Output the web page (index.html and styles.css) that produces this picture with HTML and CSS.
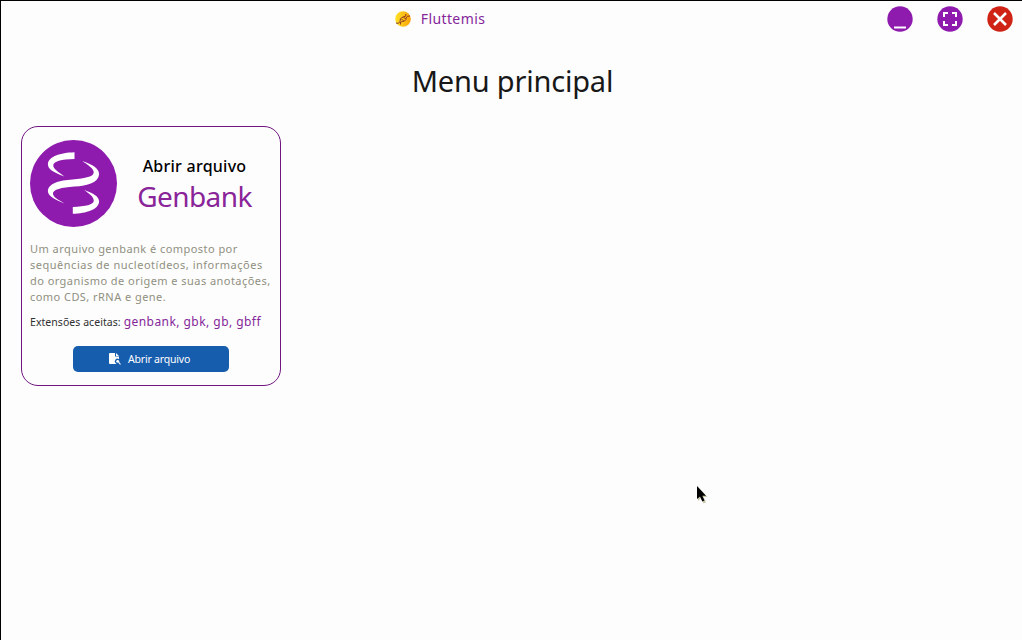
FILE: index.html
```html
<!DOCTYPE html>
<html lang="pt-BR">
<head>
<meta charset="utf-8">
<title>Fluttemis</title>
<link rel="stylesheet" href="styles.css">
</head>
<body>
<div class="window">
  <header class="titlebar">
    <div class="brand">
      <svg class="brand-logo" viewBox="0 0 16 16"><defs><linearGradient id="sun"><stop offset="0" stop-color="#ffe329"/><stop offset="1" stop-color="#f7a007"/></linearGradient></defs><circle cx="8" cy="8" r="7.8" fill="url(#sun)"/><path d="M1 12Q4 13.500 5 10.500Q4.500 7 8 6Q11.500 6 11 3M5.500 13.500Q4.500 10.500 7.500 10.500Q11.500 10 11 7Q12 4.500 15 5M6.500 8L8.500 10M8.500 6L10.500 8" fill="none" stroke="#8d3a25" stroke-width="1"/></svg>
      <span class="brand-name">Fluttemis</span>
    </div>
    <nav class="controls">
      <svg class="control" viewBox="0 0 26 26"><circle class="violet" cx="13" cy="13" r="12.700"/><path class="line" d="M7 21.500H19"/></svg>
      <svg class="control" viewBox="0 0 26 26"><circle class="violet" cx="13" cy="13" r="12.700"/><path class="line" d="M7 11V7H11M15 7H19V11M19 15V19H15M11 19H7V15"/></svg>
      <svg class="control" viewBox="0 0 26 26"><circle class="red" cx="13" cy="13" r="12.700"/><path class="line cross" d="M7 7L19 19M19 7L7 19"/></svg>
    </nav>
  </header>
  <main>
    <h1 class="title">Menu principal</h1>
    <section class="card">
      <div class="card-head">
        <svg class="helix" viewBox="0 0 86 86"><circle class="violet" cx="43" cy="43" r="43"/>
          <g fill="#fff"><path d="M44 12V18.700C31 19 23 21 23 25C23 29 28 31.500 34 36C23 32 17.700 29 17.700 24C18 16 30 12.500 44 12Z"/><path d="M51.700 20.700C63 25 68.300 28 68.300 34C67.500 42 57 45 44 46C31 47 22.500 49 22.700 53C23 57 28 59 34 62.700C23 58.500 17.700 55 17.700 50.500C18 43 29 39.800 42 39C55 38 63 36.500 63 32C63 28 57 24.500 51.700 20.700Z"/><path d="M53.300 49.300C63 53 68.300 56 68.300 61C67.500 69 56 72.300 42.300 73V66.200C55 65.500 63 64 63 60C63 56 58 53 53.300 49.300Z"/></g>
        </svg>
        <div class="card-title"><span class="action">Abrir arquivo</span><span class="format">Genbank</span></div>
      </div>
      <p class="description">Um arquivo genbank é composto por<br><span class="wide">sequências de nucleotídeos, informações</span><br>do organismo de origem e suas anotações,<br>como CDS, rRNA e gene.</p>
      <p class="extensions"><span class="label">Extensões aceitas:</span><span class="values">genbank, gbk, gb, gbff</span></p>
      <button class="open"><svg class="file" viewBox="0 0 12 12"><path fill="#fff" d="M1 0H6V3.500H10V6.200A2.600 2.600 0 0 0 7 10.500L7.500 11H1Q0 11 0 10V1Q0 0 1 0ZM7 0L10 3H7Z"/><circle cx="8.700" cy="8.300" r="1.400" fill="#fff"/><path d="M9.500 9L11.500 11.500" stroke="#fff" stroke-width="1.200"/></svg><span>Abrir arquivo</span></button>
    </section>
  </main>
  <svg class="cursor" viewBox="0 0 12 19"><path d="M1 1V15L4 12L6.500 17.500L9 16.500L6.500 11H10.500Z" fill="#c9c9ad" transform="translate(1 1)"/><path d="M1 1V14L4 11.500L6.300 16.500L8.500 15.500L6.300 10.800H10Z" fill="#000"/></svg>
</div>
</body>
</html>
```
FILE: styles.css
```css
* { box-sizing: border-box; }
body { margin: 0; font-family: "Noto Sans", "Open Sans", sans-serif; background: #fdfdfe; }
.window { position: relative; height: 640px; overflow: hidden; border: solid #000; border-width: 1px 0 0 1px; }
.titlebar { display: flex; align-items: center; height: 35px; padding-right: 9px; }
.brand { flex: 1; display: flex; align-items: center; justify-content: center; gap: 10px; margin-right: 8px; }
.brand-logo { width: 16px; height: 16px; }
.brand-name { font-size: 14px; line-height: 20px; letter-spacing: 0.4px; color: #852799; }
.controls { display: flex; gap: 24px; }
.control { width: 26px; height: 26px; }
.violet { fill: #8e1bad; }
.red { fill: #cf2415; }
.line { fill: none; stroke: #fff; stroke-width: 2; }
.cross { stroke-width: 2.6; }
.title { margin: 25px 0 0 2px; height: 40px; text-align: center; font-size: 29px; font-weight: 400; line-height: 40px; letter-spacing: -0.2px; color: #181818; }
.card { width: 260px; height: 260px; margin: 25px 0 0 20px; padding: 13px 8px 0; border: 1px solid #701680; border-radius: 17px; display: flex; flex-direction: column; }
.card-head { display: flex; gap: 20px; }
.helix { width: 87px; height: 87px; }
.card-title { display: flex; flex-direction: column; align-items: center; padding-top: 14px; width: 115px; }
.action { font-size: 16px; font-weight: 500; line-height: 24px; letter-spacing: 0.25px; color: #000; white-space: nowrap; }
.format { font-size: 28px; line-height: 37px; letter-spacing: -0.6px; color: #8a2499; }
.description { margin: 14px 0 0; font-size: 11px; line-height: 16px; letter-spacing: 0.45px; color: #909080; white-space: nowrap; }
.wide { letter-spacing: 0.51px; }
.extensions { display: flex; align-items: baseline; gap: 3px; margin: 8px 0 0; line-height: 17px; white-space: nowrap; }
.label { font-size: 10.5px; letter-spacing: 0.05px; color: #303030; }
.values { font-size: 12px; letter-spacing: 0.45px; color: #852799; }
.open { display: flex; align-items: center; justify-content: flex-start; gap: 7px; width: 156px; height: 26px; margin: 15px 0 0 43px; padding: 0 0 0 36px; border: 0; border-radius: 5px; background: #175dae; color: #fff; font: 10.5px/16px "Noto Sans", sans-serif; letter-spacing: -0.2px; }
.file { width: 12px; height: 12px; }
.cursor { position: absolute; left: 695px; top: 484px; width: 12px; height: 19px; }
```
